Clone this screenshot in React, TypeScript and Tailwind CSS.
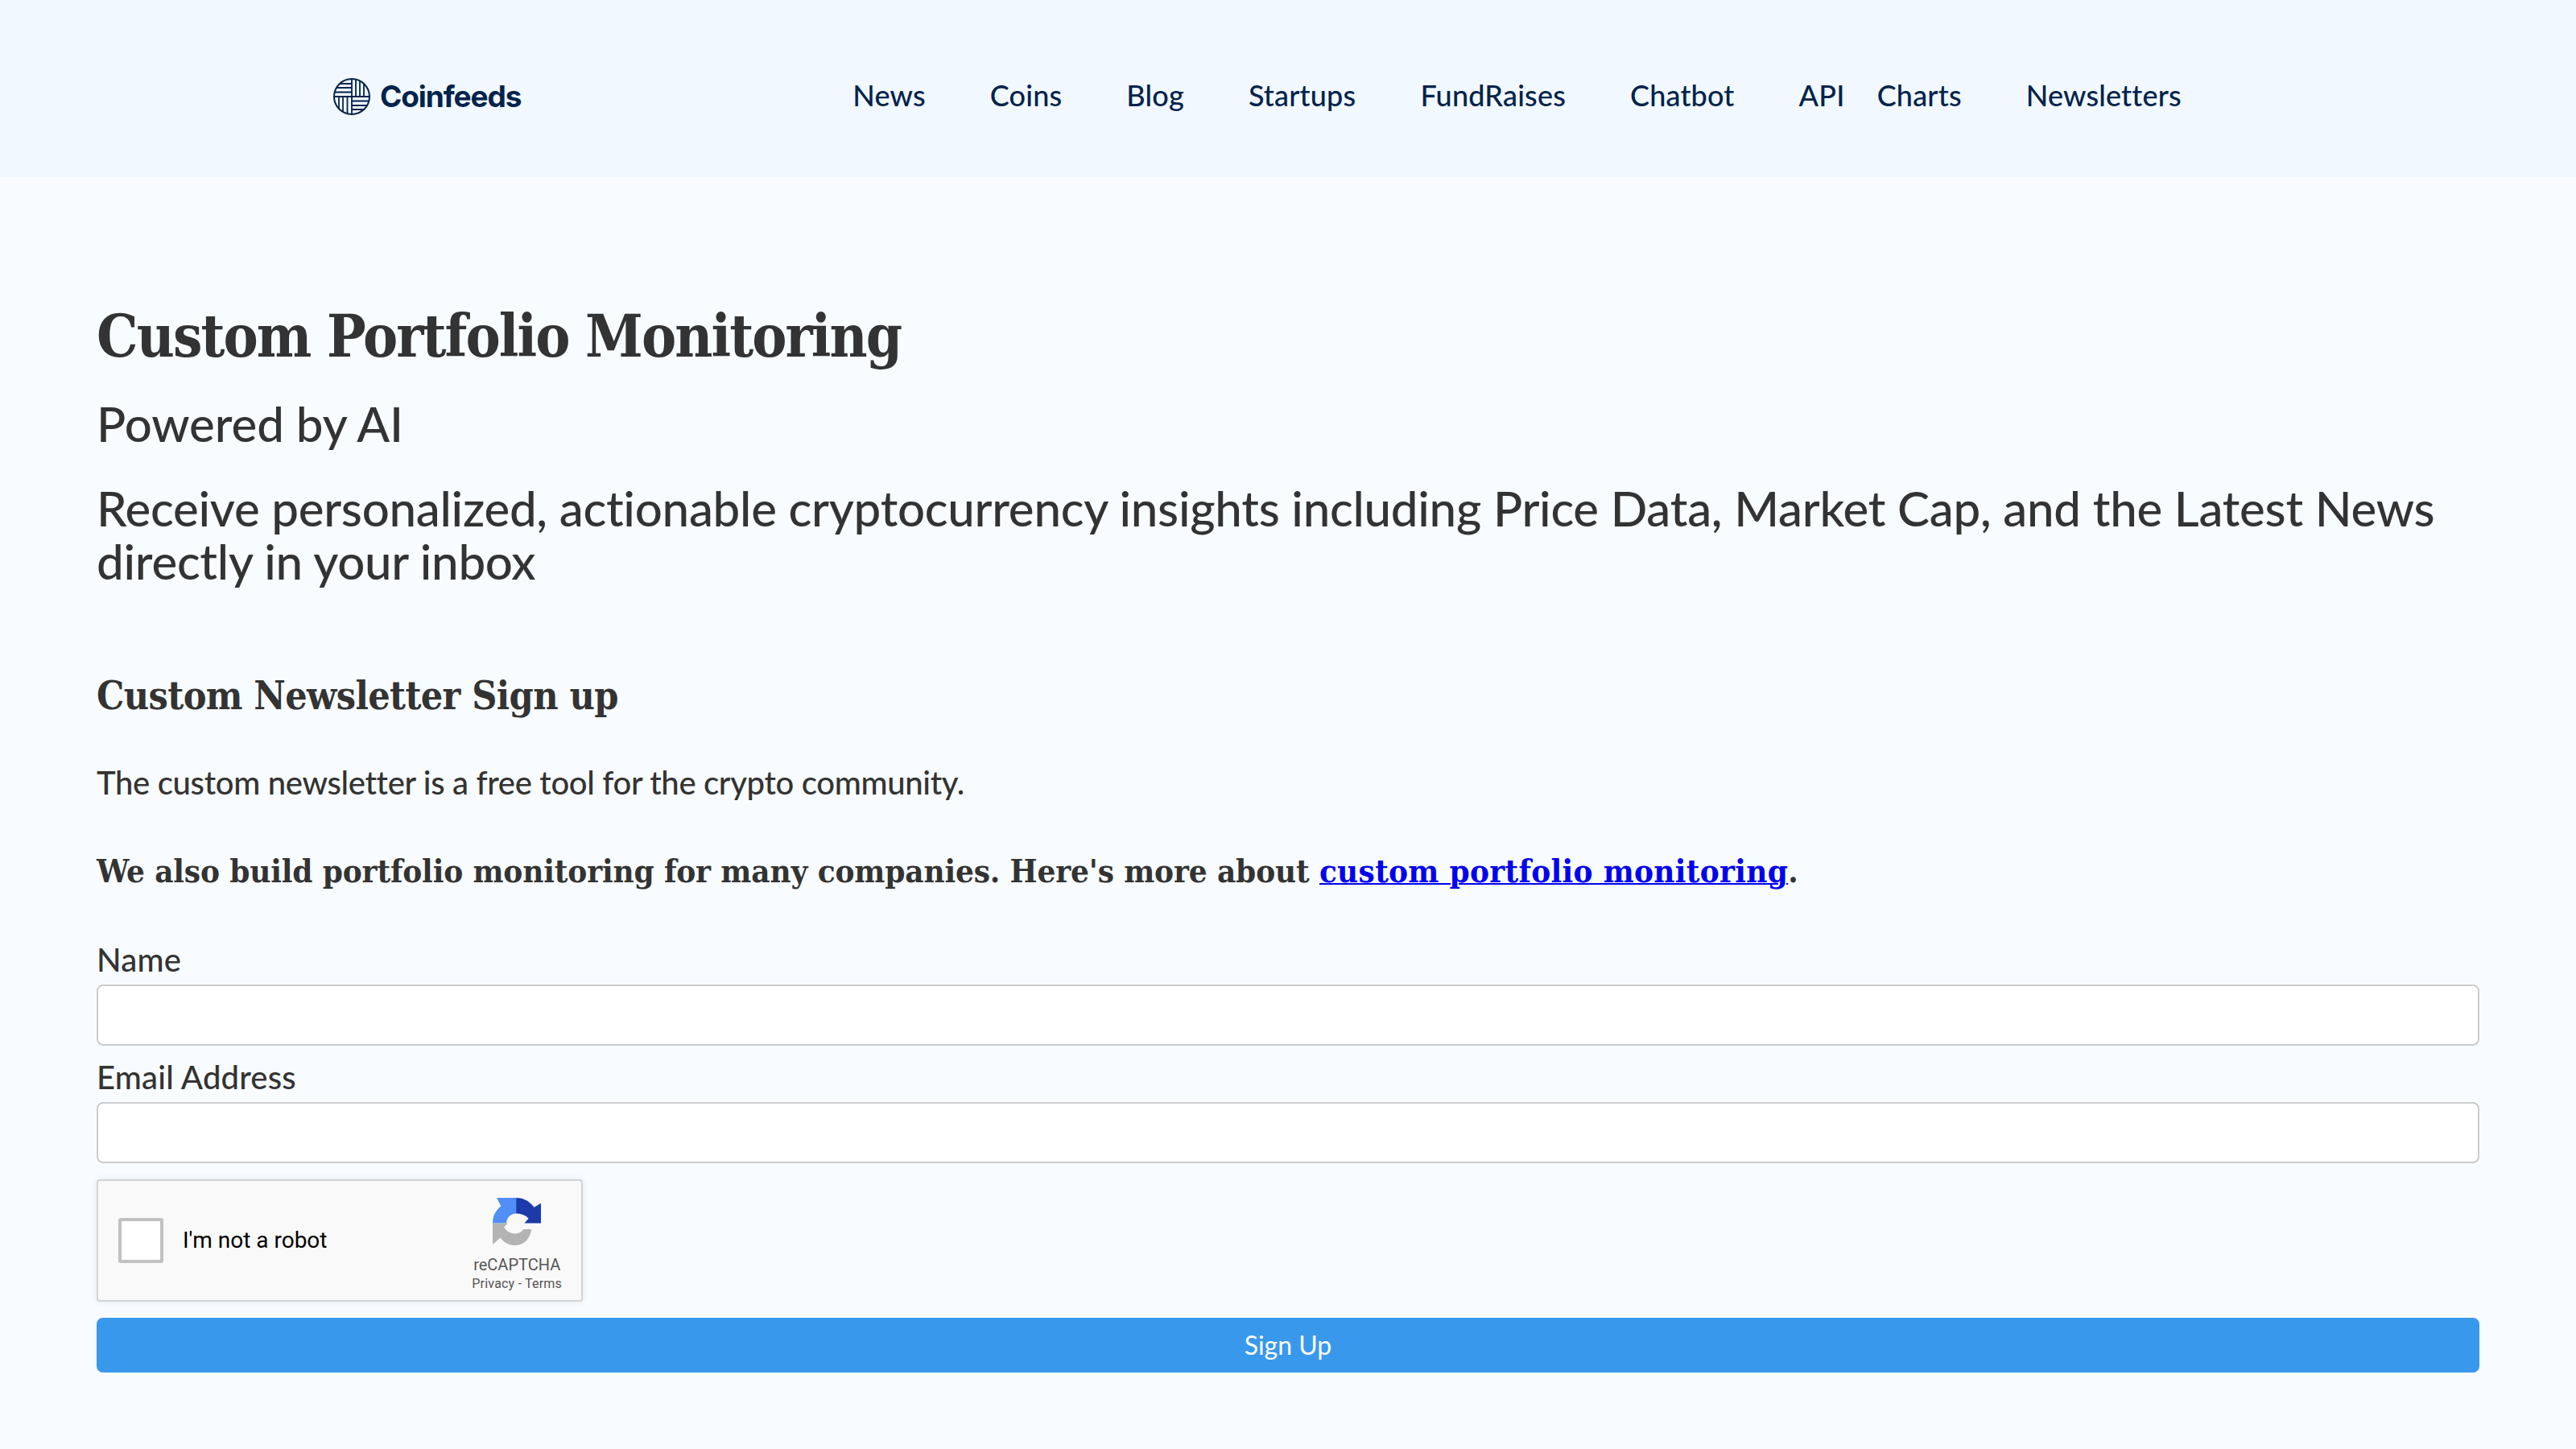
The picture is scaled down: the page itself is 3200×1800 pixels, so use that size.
export default function App() {
  const nav: [string, string][] = [
    ["News", "mr-[80px]"],
    ["Coins", "mr-[80px]"],
    ["Blog", "mr-[80px]"],
    ["Startups", "mr-[80px]"],
    ["FundRaises", "mr-[80px]"],
    ["Chatbot", "mr-[80px]"],
    ["API", "mr-[40px]"],
    ["Charts", "mr-[80px]"],
    ["Newsletters", ""],
  ];
  return (
    <div className="min-h-[1800px] bg-[#f8fcff] font-['Lato',sans-serif] text-[#333333] [font-variant-ligatures:none]">
      <header className="flex h-[220px] items-center bg-[#f1f8ff] pt-[20px] pl-[414px]">
        <svg width="46" height="46" viewBox="0 0 46 46" className="shrink-0" fill="none" stroke="#00234b" strokeWidth="1.8">
          <defs>
            <clipPath id="logo-clip">
              <circle cx="23" cy="23" r="22.500" />
            </clipPath>
          </defs>
          <g clipPath="url(#logo-clip)">
            <path d="M0 7H23M0 12H23M0 17.500H23M0 23H46" />
            <path d="M23 0V23M28 0V23M33 0V23M38 0V23" />
            <path d="M7 23V46M12 23V46M17.500 23V46M23 23V46" />
            <path d="M23 28.500H46M23 34H46M23 39H46" />
          </g>
          <circle cx="23" cy="23" r="22" strokeWidth="2" />
        </svg>
        <span className="ml-[12px] font-['Inter',sans-serif] text-[37px] font-bold tracking-[-1.1px] text-[#00234b]">Coinfeeds</span>
        <nav className="mb-[4px] ml-[412px] flex text-[36px] font-medium tracking-[0.18px] text-[#00234b]">
          {nav.map(([t, m]) => (
            <a key={t} className={m}>{t}</a>
          ))}
        </nav>
      </header>
      <main className="px-[120px] pt-[152px]">
        <h1 className="font-['DejaVu_Serif_Condensed','DejaVu_Serif',serif] text-[72px] leading-[92px] font-bold tracking-[-1.9px]">Custom Portfolio Monitoring</h1>
        <h2 className="mt-[26px] text-[60px] leading-[72px] font-medium tracking-[-0.1px]">Powered by AI</h2>
        <h3 className="mt-[36px] text-[60px] leading-[66px] font-medium tracking-[-0.26px]">Receive personalized, actionable cryptocurrency insights including Price Data, Market Cap, and the Latest News directly in your inbox</h3>
        <h4 className="mt-[104px] font-['DejaVu_Serif_Condensed','DejaVu_Serif',serif] text-[48px] leading-[60px] font-bold tracking-[-0.6px]">Custom Newsletter Sign up</h4>
        <p className="mt-[50px] text-[40px] leading-[56px] font-medium tracking-[-0.32px]">The custom newsletter is a free tool for the crypto community.</p>
        <p className="mt-[54px] font-['DejaVu_Serif_Condensed','DejaVu_Serif',serif] text-[40px] leading-[56px] font-bold tracking-[-0.14px]">
          We also build portfolio monitoring for many companies. Here's more about{" "}
          <a className="tracking-[0.3px] text-[#0000ee] underline decoration-2">custom portfolio monitoring</a>.
        </p>
        <form className="mt-[51px]">
          <label className="block text-[40px] leading-[62px] font-medium tracking-[0.2px]">Name</label>
          <input className="block h-[76px] w-full rounded-[8px] border-2 border-[#cccccc] bg-white" />
          <label className="mt-[8px] block text-[40px] leading-[62px] font-medium tracking-[0.2px]">Email Address</label>
          <input className="block h-[76px] w-full rounded-[8px] border-2 border-[#cccccc] bg-white" />
          <div className="mt-[20px] flex h-[152px] w-[604px] items-center justify-between rounded-[4px] border-2 border-[#d3d3d3] bg-[#f9f9f9] pr-[24px] pl-[25px] shadow-[0_0_8px_rgba(0,0,0,0.08)]">
            <div className="flex items-center">
              <div className="h-[56px] w-[56px] rounded-[3px] border-[4px] border-[#c1c1c1] bg-white" />
              <span className="ml-[24px] font-['Roboto',sans-serif] text-[28px] text-black">I'm not a robot</span>
            </div>
            <div className="flex flex-col items-center pt-[10px] font-['Roboto',sans-serif] text-[#555555]">
              <svg width="60" height="59" viewBox="75 28 175 172">
                <path d="M90 28H160V85C140 85 125 100 125 120H75C75 95 85 75 105 58Z" fill="#4f8ff7" />
                <path d="M160 28C190 28 210 42 225 62L250 48V120H190L205 103C195 92 180 85 160 85Z" fill="#1c3aa9" />
                <path d="M75 120H130L116 134C125 150 140 158 158 158C170 158 180 152 187 142H216C210 175 190 200 158 200C135 200 115 190 103 172L75 197Z" fill="#b3b3b3" />
              </svg>
              <span className="mt-[12px] text-[20px] leading-[24px]">reCAPTCHA</span>
              <span className="mt-[2px] text-[16px] leading-[20px] tracking-[0.2px]">Privacy - Terms</span>
            </div>
          </div>
          <button type="button" className="mt-[20px] h-[68px] w-full rounded-[8px] bg-[#3898ec] text-center text-[32px] text-white">Sign Up</button>
        </form>
      </main>
    </div>
  );
}
